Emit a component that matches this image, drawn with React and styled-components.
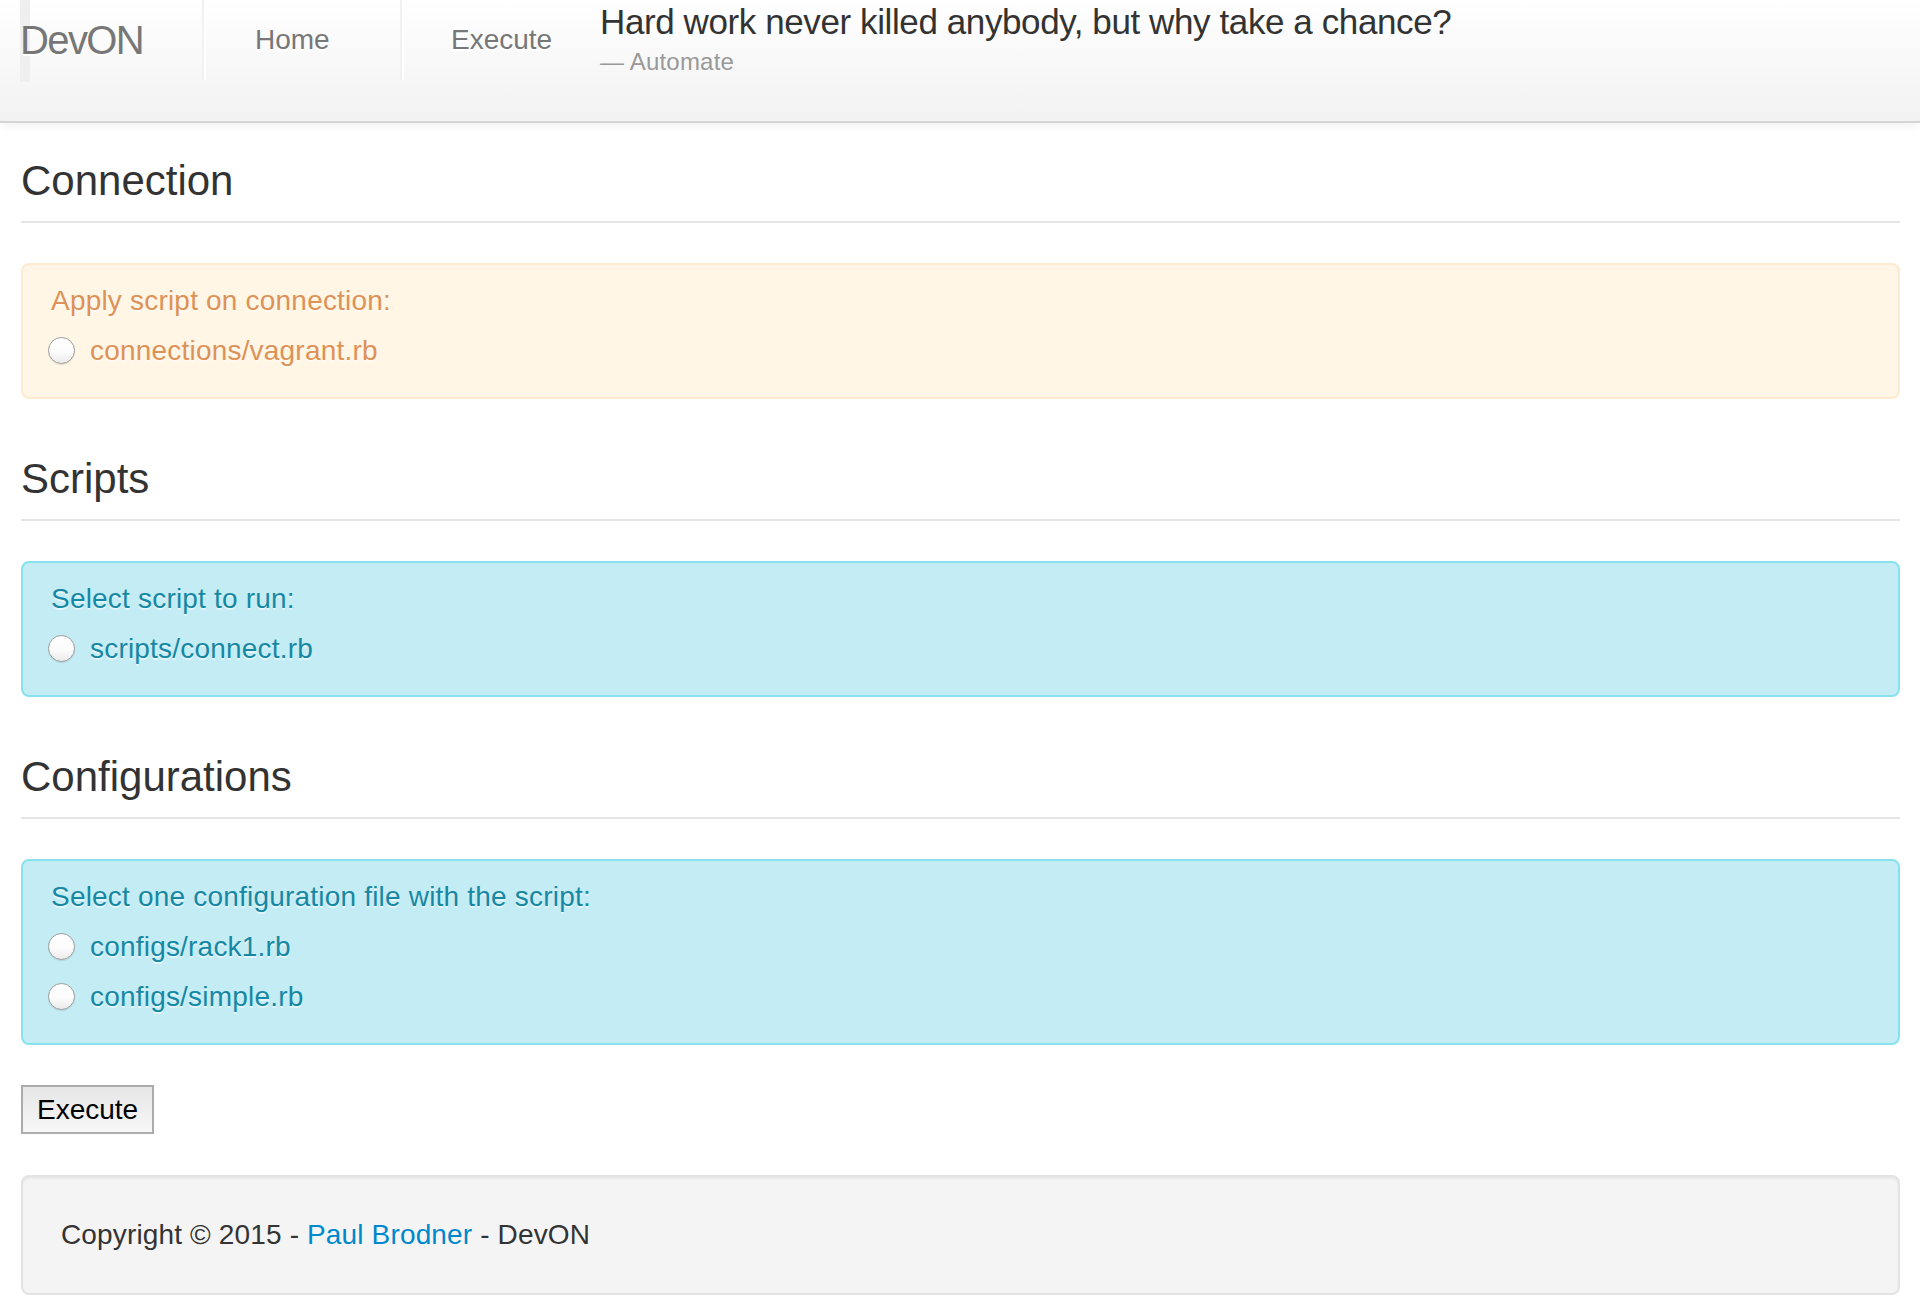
import React from "react";
import styled, { createGlobalStyle } from "styled-components";

const GlobalStyle = createGlobalStyle`
  html, body {
    margin: 0;
    padding: 0;
    background: #ffffff;
  }
  body {
    font-family: "Liberation Sans", Helvetica, Arial, sans-serif;
    font-size: 28px;
    line-height: 40px;
    color: #333333;
  }
  * { box-sizing: border-box; }
`;

const Navbar = styled.header`
  display: flex;
  align-items: flex-start;
  min-height: 123px;
  background: linear-gradient(to bottom, #ffffff 0%, #f2f2f2 100%);
  border-bottom: 2px solid #d4d4d4;
  box-shadow: 0 2px 10px rgba(0, 0, 0, 0.07);
  position: relative;
  z-index: 1;
`;

const Brand = styled.a`
  position: relative;
  display: block;
  width: 202px;
  height: 80px;
  padding-left: 20px;
  font-size: 40px;
  line-height: 80px;
  letter-spacing: -1.6px;
  color: #777777;
  text-decoration: none;
  text-shadow: 0 2px 0 #ffffff;

  &::before {
    content: "";
    position: absolute;
    z-index: -1;
    left: 20px;
    top: 0;
    width: 10px;
    height: 82px;
    background: #efefef;
  }
`;

const Divider = styled.span`
  display: block;
  width: 4px;
  height: 80px;
  border-left: 2px solid #f2f2f2;
  border-right: 2px solid #ffffff;
`;

const NavLink = styled.a`
  display: block;
  width: ${(p) => p.$width}px;
  padding: 20px 0 20px ${(p) => p.$pad}px;
  font-size: 28px;
  line-height: 40px;
  color: #777777;
  text-decoration: none;
  text-shadow: 0 2px 0 #ffffff;
`;

const Quote = styled.blockquote`
  margin: 0;
  padding: 0;
`;

const QuoteText = styled.p`
  margin: 0;
  font-size: 35px;
  line-height: 44px;
  font-weight: 300;
  letter-spacing: -0.4px;
  color: #333333;
`;

const QuoteSource = styled.small`
  display: block;
  margin-top: -2px;
  font-size: 24px;
  line-height: 40px;
  letter-spacing: 0.2px;
  color: #999999;
`;

const Main = styled.main`
  padding: 18px 20px 20px 21px;
`;

const Section = styled.section`
  margin: 0;
`;

const SectionTitle = styled.h2`
  margin: 0 0 40px;
  font-size: 42px;
  font-weight: normal;
  line-height: 80px;
  color: #333333;
  border-bottom: 2px solid #e5e5e5;
`;

const tones = {
  warning: { bg: "#fff6e5", border: "#fdeacf", text: "#dd9257" },
  info: { bg: "#c4ecf5", border: "#86e3ee", text: "#1688a3" },
};

const Alert = styled.div`
  margin-bottom: 40px;
  padding: 16px 70px 16px 28px;
  border: 2px solid ${(p) => tones[p.$tone].border};
  border-radius: 8px;
  background: ${(p) => tones[p.$tone].bg};
  color: ${(p) => tones[p.$tone].text};
  text-shadow: 0 2px 0 rgba(255, 255, 255, 0.5);
  letter-spacing: 0.2px;
`;

const AlertLabel = styled.div`
  margin-bottom: 10px;
  font-size: 28px;
  line-height: 40px;
`;

const RadioRow = styled.label`
  display: flex;
  align-items: center;
  gap: 15px;
  margin-bottom: 10px;
  font-size: 28px;
  line-height: 40px;
  cursor: pointer;
`;

const Radio = styled.input.attrs({ type: "radio" })`
  appearance: none;
  -webkit-appearance: none;
  flex: 0 0 auto;
  width: 27px;
  height: 27px;
  margin: -2px 0 0 -3px;
  border-radius: 50%;
  border: 1px solid #9c9c9c;
  background: linear-gradient(to bottom, #ffffff 0%, #fcfcfc 55%, #ebebeb 100%);
  box-shadow: inset 0 1px 0 #ffffff, 0 1px 1px rgba(0, 0, 0, 0.1);
`;

const SubmitButton = styled.button`
  display: block;
  height: 49px;
  margin: 0 0 41px;
  padding: 0 14px;
  border: 2px solid #ababab;
  border-radius: 0;
  background: linear-gradient(to bottom, #e6e6e6 0%, #f7f7f7 100%);
  font-family: "Liberation Sans", Helvetica, Arial, sans-serif;
  font-size: 28px;
  line-height: 45px;
  color: #000000;
`;

const Well = styled.footer`
  min-height: 119px;
  padding: 38px;
  border: 2px solid #e3e3e3;
  border-radius: 8px;
  background: #f4f4f4;
  box-shadow: inset 0 2px 2px rgba(0, 0, 0, 0.05);
  font-size: 28px;
  line-height: 40px;
  letter-spacing: 0.15px;
  color: #333333;
`;

const FooterLink = styled.a`
  color: #0088cc;
  text-decoration: none;
`;

const sections = [
  {
    title: "Connection",
    tone: "warning",
    label: "Apply script on connection:",
    name: "connection",
    options: ["connections/vagrant.rb"],
  },
  {
    title: "Scripts",
    tone: "info",
    label: "Select script to run:",
    name: "script",
    options: ["scripts/connect.rb"],
  },
  {
    title: "Configurations",
    tone: "info",
    label: "Select one configuration file with the script:",
    name: "config",
    options: ["configs/rack1.rb", "configs/simple.rb"],
  },
];

export default function App() {
  return (
    <>
      <GlobalStyle />
      <Navbar>
        <Brand href="#">DevON</Brand>
        <Divider />
        <NavLink href="#" $width={194} $pad={49}>
          Home
        </NavLink>
        <Divider />
        <NavLink href="#" $width={196} $pad={47}>
          Execute
        </NavLink>
        <Quote>
          <QuoteText>Hard work never killed anybody, but why take a chance?</QuoteText>
          <QuoteSource>— Automate</QuoteSource>
        </Quote>
      </Navbar>
      <Main>
        <form onSubmit={(e) => e.preventDefault()}>
          {sections.map((s) => (
            <Section key={s.name}>
              <SectionTitle>{s.title}</SectionTitle>
              <Alert $tone={s.tone}>
                <AlertLabel>{s.label}</AlertLabel>
                {s.options.map((o) => (
                  <RadioRow key={o}>
                    <Radio name={s.name} value={o} />
                    {o}
                  </RadioRow>
                ))}
              </Alert>
            </Section>
          ))}
          <SubmitButton type="submit">Execute</SubmitButton>
        </form>
        <Well>
          Copyright © 2015 - <FooterLink href="#">Paul Brodner</FooterLink> - DevON
        </Well>
      </Main>
    </>
  );
}
